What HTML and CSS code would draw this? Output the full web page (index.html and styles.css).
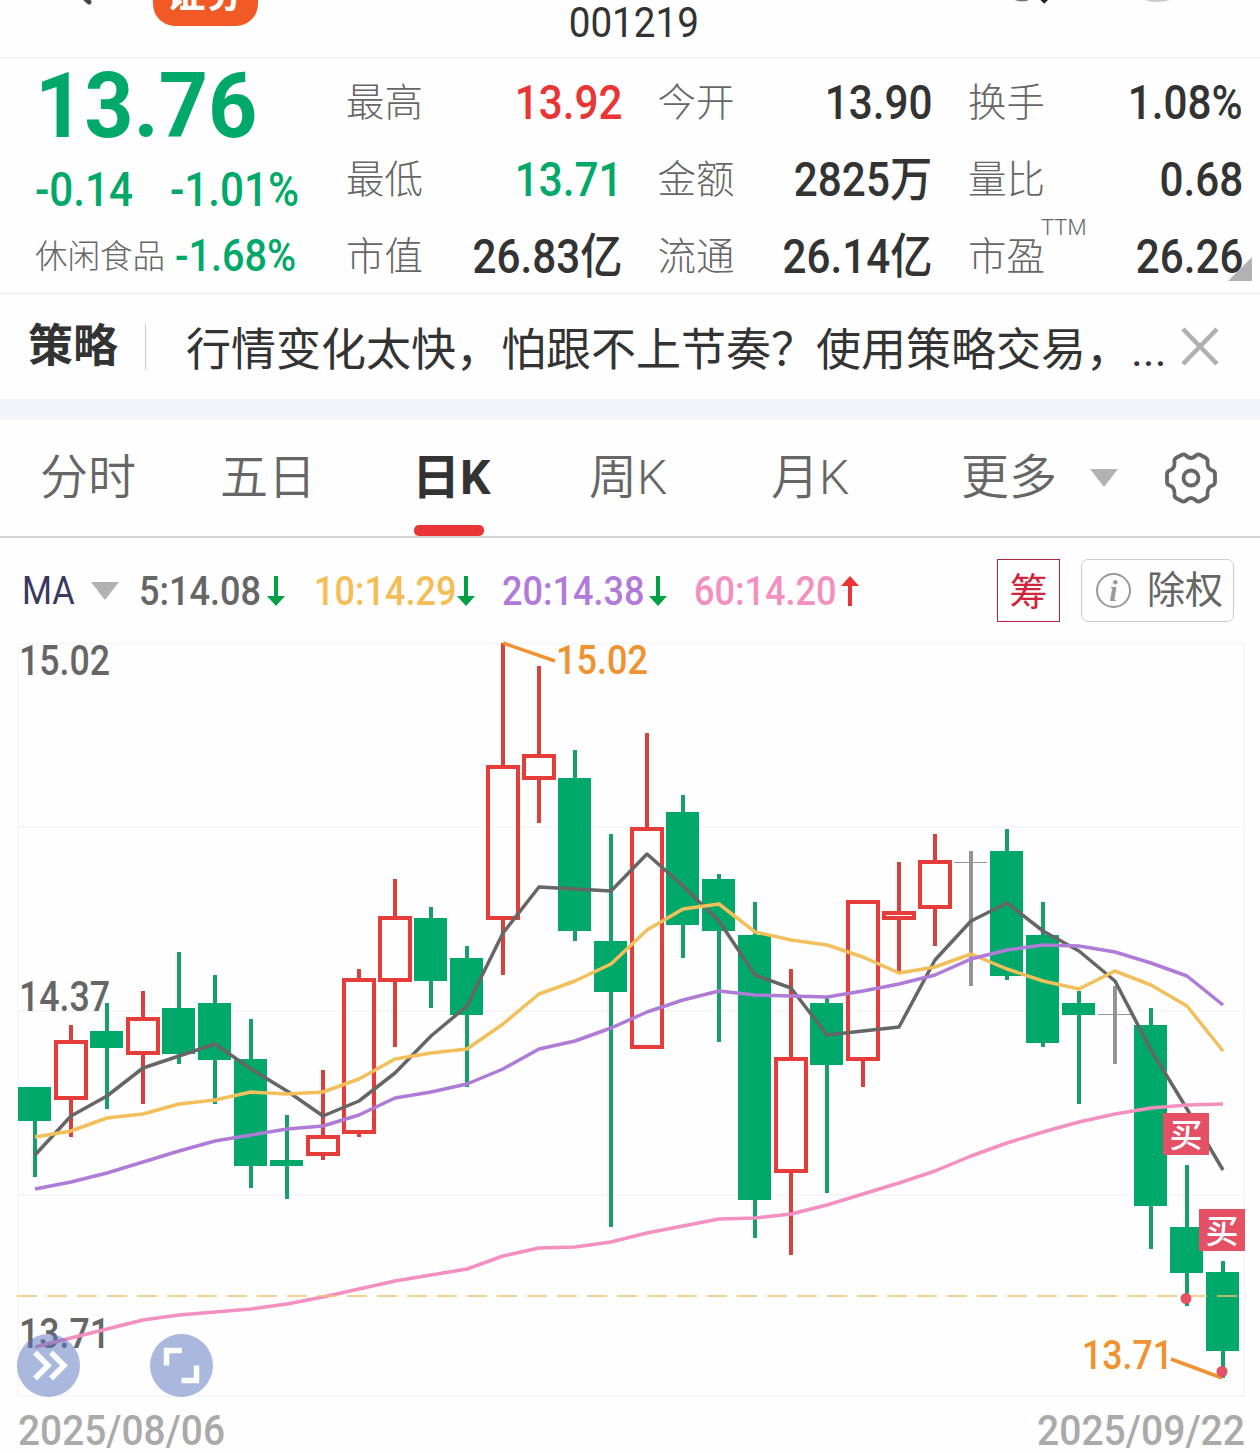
FILE: index.html
```
<!DOCTYPE html>
<html lang="zh-CN">
<head>
    <meta charset="UTF-8">
    <title>001219</title>
    <link rel="stylesheet" href="styles.css">
</head>
<body>
    <div class="topbar">
        <svg class="back" width="20" height="8" viewBox="0 0 20 8"><path d="M0 -9L12 2" stroke="#444" stroke-width="5" stroke-linecap="round"/></svg>
        <div class="logo">证券</div>
        <div class="code"><span class="num">001219</span></div>
        <svg class="tools" width="200" height="8" viewBox="0 0 200 8">
            <circle cx="22" cy="-16" r="16" fill="none" stroke="#777" stroke-width="3"/>
            <path d="M34 -10L46 2" stroke="#222" stroke-width="5"/>
            <circle cx="157" cy="-38" r="39" fill="#eee" stroke="#c9c9c9" stroke-width="2"/>
        </svg>
    </div>

    <div class="quote">
        <div class="price-box">
            <div class="price"><span class="num">13.76</span></div>
            <div class="change"><span class="num">-0.14</span><span class="num">-1.01%</span></div>
            <div class="sector"><span class="sector-name">休闲食品</span><span class="num">-1.68%</span></div>
        </div>
        <div class="stats">
            <div class="stat"><label>最高</label><span class="num red">13.92</span></div>
            <div class="stat"><label>今开</label><span class="num">13.90</span></div>
            <div class="stat"><label>换手</label><span class="num">1.08%</span></div>
            <div class="stat"><label>最低</label><span class="num green one">13.71</span></div>
            <div class="stat"><label>金额</label><span class="num">2825万</span></div>
            <div class="stat"><label>量比</label><span class="num">0.68</span></div>
            <div class="stat"><label>市值</label><span class="num">26.83亿</span></div>
            <div class="stat"><label>流通</label><span class="num">26.14亿</span></div>
            <div class="stat"><label>市盈<span class="ttm">TTM</span></label><span class="num">26.26</span></div>
        </div>
        <div class="corner"></div>
    </div>

    <div class="notice">
        <b>策略</b>
        <p>行情变化太快，怕跟不上节奏？使用策略交易，...</p>
        <svg width="40" height="40" viewBox="0 0 40 40"><path d="M3 2L37 37M37 2L3 37" stroke="#b0b0b0" stroke-width="4.6"/></svg>
    </div>

    <div class="tabs">
        <div class="tab">分时</div>
        <div class="tab">五日</div>
        <div class="tab active">日K</div>
        <div class="tab">周K</div>
        <div class="tab">月K</div>
        <div class="tab">更多</div>
        <div class="caret"></div>
        <svg class="gear" width="54" height="54" viewBox="0 0 54 54" fill="none" stroke="#666" stroke-width="3.8" stroke-linejoin="round">
            <path d="M18.5 3.5Q21 3 22.5 5Q27 9 31.5 5Q33 3 35.5 3.5L42 7Q44 8.500 43.500 11Q43 18 48.500 19.500Q51 20.500 51 23V31Q51 33.500 48.500 34.500Q43 36 43.500 43Q44 45.500 42 47L35.500 50.500Q33 51 31.500 49Q27 45 22.500 49Q21 51 18.500 50.500L12 47Q10 45.500 10.500 43Q11 36 5.500 34.500Q3 33.500 3 31V23Q3 20.500 5.500 19.500Q11 18 10.500 11Q10 8.500 12 7Z"/>
            <circle cx="27" cy="27" r="7.500"/>
        </svg>
    </div>

    <div class="ma-row">
        <div class="ma-name"><span class="num">MA</span></div>
        <div class="caret"></div>
        <div class="ma ma5"><span class="num">5:14.08</span></div>
        <svg class="arrow down" width="18" height="30" viewBox="0 0 18 30"><path d="M7 0H11V20H18L9 30L0 20H7Z"/></svg>
        <div class="ma ma10"><span class="num">10:14.29</span></div>
        <svg class="arrow down" width="18" height="30" viewBox="0 0 18 30"><path d="M7 0H11V20H18L9 30L0 20H7Z"/></svg>
        <div class="ma ma20"><span class="num">20:14.38</span></div>
        <svg class="arrow down" width="18" height="30" viewBox="0 0 18 30"><path d="M7 0H11V20H18L9 30L0 20H7Z"/></svg>
        <div class="ma ma60"><span class="num">60:14.20</span></div>
        <svg class="arrow up" width="18" height="30" viewBox="0 0 18 30"><path d="M7 30H11V10H18L9 0L0 10H7Z"/></svg>
        <div class="chip-btn">筹</div>
        <div class="adjust-btn"><span class="info">i</span>除权</div>
    </div>

    <svg class="chart" width="1260" height="815" viewBox="0 638 1260 815">
        <path class="grid" d="M18 643.500H1244M18 827H1244M18 1011H1244M18 1195H1244M18 1396H1244M18 643V1396M1244 643V1396"/>
        <g class="axis">
            <text x="19" y="675" textLength="91">15.02</text>
            <text x="19" y="1011" textLength="91">14.37</text>
            <text x="19" y="1348" textLength="91">13.71</text>
        </g>
        <g id="candles"></g>
        <g id="lines"></g>
        <path class="dash" d="M17 1296H1238"/>
        <path class="pointer" d="M503 643L555 661M1171 1359L1222 1378"/>
        <g class="extreme">
            <text x="556" y="674" textLength="92">15.02</text>
            <text x="1082" y="1369" textLength="91">13.71</text>
        </g>
        <g class="buy">
            <circle cx="1186" cy="1298.500" r="5.500"/>
            <circle cx="1222" cy="1371.500" r="5.500"/>
            <rect x="1163" y="1113" width="46" height="42"/>
            <rect x="1199" y="1209" width="46" height="42"/>
            <text x="1186" y="1147">买</text>
            <text x="1222" y="1243">买</text>
        </g>
        <g class="round-btn">
            <circle cx="48.500" cy="1365.500" r="31.500"/>
            <circle cx="181.500" cy="1365.500" r="31.500"/>
            <path d="M35 1352.500L48 1365.500L35 1378.500M51 1352.500L64 1365.500L51 1378.500M182 1350.500H166.500V1365.500M181.500 1380.500H196.500V1365.500"/>
        </g>
        <g class="dates">
            <text x="18" y="1445" textLength="207">2025/08/06</text>
            <text x="1037" y="1445" textLength="208">2025/09/22</text>
        </g>
    </svg>
    <script src="chart.js"></script>
</body>
</html>
```
FILE: styles.css
```
body {
    margin: 0;
    width: 1260px;
    height: 1453px;
    overflow: hidden;
    background: #fefefe;
    color: #333;
    font-family: Roboto, "Noto Sans CJK SC", sans-serif;
}
.num {
    display: inline-block;
    transform: scaleX(0.88);
    transform-origin: left center;
    white-space: nowrap;
}
.red {
    color: #e93535;
}
.green {
    color: #00a969;
}

/* top bar */
.topbar {
    height: 57px;
    display: flex;
    align-items: flex-start;
    border-bottom: 1px solid #e9e9e9;
}
.back {
    margin-left: 77px;
}
.logo {
    margin: -30px 0 0 56px;
    width: 105px;
    height: 56px;
    line-height: 48px;
    border-radius: 22px;
    background: #f15a24;
    color: #fff;
    font-size: 39px;
    font-weight: 700;
    text-align: center;
}
.code {
    width: 751px;
    text-align: center;
    font-size: 42px;
    line-height: 46px;
}
.code .num {
    transform: scaleX(0.92);
    transform-origin: center;
}
.tools {
    flex: none;
    margin-left: -9px;
}

/* quote */
.quote {
    position: relative;
    height: 235px;
    display: flex;
    border-bottom: 1px solid #e9e9e9;
}
.price-box {
    width: 346px;
    flex: none;
    color: #00a969;
    font-weight: 500;
}
.price {
    height: 94px;
    line-height: 96px;
    padding-left: 35px;
    font-size: 91.5px;
    font-weight: 700;
}
.price .num {
    transform: scaleX(0.94);
}
.change {
    display: grid;
    grid-template-columns: 135px 160px;
    padding-left: 35px;
    height: 74px;
    line-height: 75px;
    font-size: 48px;
}
.sector {
    display: grid;
    grid-template-columns: 140px 150px;
    padding-left: 35px;
    line-height: 60px;
    font-size: 45px;
}
.sector-name {
    color: #666;
    font-size: 32.500px;
    font-weight: 300;
    line-height: 62px;
}
.stats {
    display: grid;
    grid-template-columns: 276px 275px 275px;
    grid-auto-rows: 77px;
    column-gap: 35.500px;
    padding-top: 6px;
}
.stat {
    display: flex;
    justify-content: space-between;
    line-height: 77px;
    font-size: 48px;
    font-weight: 500;
}
.stat label {
    position: relative;
    color: #666;
    font-size: 38.500px;
    font-weight: 300;
}
.stat .num {
    transform-origin: right center;
}
.ttm {
    position: absolute;
    left: 73px;
    top: -29px;
    font-size: 22px;
}
.corner {
    position: absolute;
    right: 8px;
    bottom: 12px;
    border-left: 24px solid transparent;
    border-bottom: 24px solid #b2b2b2;
}

/* notice */
.notice {
    height: 105px;
    display: flex;
    align-items: center;
    border-bottom: 21px solid #f3f4f9;
    font-size: 45px;
}
.notice b {
    width: 89px;
    margin-left: 28px;
    padding-right: 28px;
    line-height: 46px;
    border-right: 1px solid #ccc;
    white-space: nowrap;
}
.notice p {
    margin: 0 0 0 40px;
    width: 994px;
    flex: none;
    white-space: nowrap;
}

/* tabs */
.tabs {
    height: 116px;
    display: grid;
    grid-template-columns: 180px 192px 177px 182px 190px 129px 74px 54px;
    align-items: center;
    padding-left: 40px;
    border-bottom: 2px solid #d4d4d4;
    color: #666;
    font-size: 48px;
}
.tab {
    line-height: 116px;
    font-weight: 350;
}
.tab.active {
    position: relative;
    color: #333;
    font-weight: 700;
}
.tab.active::after {
    content: "";
    position: absolute;
    left: 2px;
    bottom: 0;
    width: 70px;
    height: 11px;
    border-radius: 5px;
    background: #e93535;
}
.caret {
    width: 0;
    border-left: 14px solid transparent;
    border-right: 14px solid transparent;
    border-top: 18px solid #b2b2b2;
}

/* moving averages */
.ma-row {
    height: 100px;
    display: grid;
    grid-template-columns: 69px 48px 128px 47px 143px 45px 147px 45px 147px 156px 84px 153px;
    align-items: center;
    padding-left: 22px;
    font-size: 41px;
    font-weight: 500;
}
.ma-row > * {
    margin-top: 5px;
}
.ma-name {
    color: #3b3860;
    font-size: 39px;
    font-weight: 400;
}
.ma5 {
    color: #666;
}
.ma10 {
    color: #f4bd55;
}
.ma20 {
    color: #b07bd8;
}
.ma60 {
    color: #f48fc1;
}
.arrow.down {
    fill: #00a046;
}
.arrow.up {
    fill: #e93535;
}
.chip-btn {
    box-sizing: border-box;
    width: 63px;
    height: 63px;
    line-height: 65px;
    border: 1px solid #b0243e;
    color: #d0243a;
    font-size: 38px;
    font-weight: 400;
    text-align: center;
}
.adjust-btn {
    box-sizing: border-box;
    height: 63px;
    line-height: 65px;
    display: flex;
    align-items: center;
    border: 1px solid #ccc;
    border-radius: 7px;
    color: #666;
    font-size: 38px;
    font-weight: 400;
}
.info {
    width: 31px;
    height: 31px;
    line-height: 31px;
    margin: 0 16px 0 14px;
    border: 2px solid #999;
    border-radius: 50%;
    color: #999;
    font: italic bold 30px/31px "Liberation Serif", serif;
    text-align: center;
}

/* chart */
.chart {
    display: block;
    font-size: 42px;
    font-weight: 500;
}
.grid {
    fill: none;
    stroke: #f7f7f7;
    stroke-width: 2;
}
.axis {
    fill: #666;
}
.chart text {
    lengthAdjust: spacingAndGlyphs;
}
.fall {
    fill: #00a969;
}
.rise {
    fill: none;
    stroke: #e63c3a;
    stroke-width: 4;
}
.wick {
    stroke-width: 4;
}
.wick.g {
    stroke: #169f6b;
}
.wick.r {
    stroke: #d8403d;
}
.wick.n {
    stroke: #93939b;
}
.flat {
    stroke: #93939b;
    stroke-width: 1;
}
.line {
    fill: none;
    stroke-width: 3.500;
    stroke-linejoin: round;
}
.dash {
    stroke: #f0c471;
    stroke-width: 1.500;
    stroke-dasharray: 20 10;
}
.pointer {
    fill: none;
    stroke: #f0922f;
    stroke-width: 3.500;
}
.extreme {
    fill: #f0922f;
    font-size: 40px;
}
.buy {
    fill: #e55064;
}
.buy text {
    fill: #fff;
    font-size: 33px;
    text-anchor: middle;
}
.round-btn circle {
    fill: #5572bd;
    opacity: 0.5;
}
.round-btn path {
    fill: none;
    stroke: #fff;
    stroke-width: 5.500;
}
.dates {
    fill: #aaa;
}
```
FILE: chart.js
```
const svgNS = "http://www.w3.org/2000/svg";

// type, body top, body bottom, wick top, wick bottom
const candles = [
    ["g", 1087, 1121, 1087, 1177], ["r", 1040, 1100, 1025, 1137], ["g", 1031, 1048, 1003, 1109],
    ["r", 1017, 1055, 991, 1104], ["g", 1008, 1054, 952, 1064], ["g", 1003, 1060, 975, 1104],
    ["g", 1059, 1166, 1019, 1188], ["g", 1160, 1166, 1115, 1199], ["r", 1135, 1156, 1070, 1160],
    ["r", 978, 1134, 969, 1137], ["r", 916, 982, 879, 1047], ["g", 918, 981, 907, 1008],
    ["g", 958, 1015, 946, 1087], ["r", 765, 920, 643, 975], ["r", 754, 780, 666, 823],
    ["g", 778, 931, 750, 941], ["g", 941, 992, 834, 1227], ["r", 827, 1049, 733, 1049],
    ["g", 812, 925, 795, 958], ["g", 879, 931, 874, 1042], ["g", 935, 1200, 902, 1238],
    ["r", 1057, 1173, 969, 1255], ["g", 1003, 1065, 998, 1193], ["r", 900, 1061, 900, 1087],
    ["r", 911, 920, 862, 973], ["r", 860, 909, 834, 946], ["n", 862, 862, 851, 986],
    ["g", 851, 976, 829, 980], ["g", 935, 1043, 902, 1047], ["g", 1003, 1015, 991, 1104],
    ["n", 1014, 1014, 986, 1064], ["g", 1025, 1206, 1008, 1249], ["g", 1227, 1273, 1165, 1306],
    ["g", 1272, 1351, 1261, 1378]
];

const averages = {
    "#666666": [1155, 1116, 1096, 1068, 1056, 1044, 1069, 1091, 1116, 1101, 1073, 1036, 1006, 933, 887, 889, 891, 854, 886, 921, 975, 988, 1035, 1031, 1027, 960, 921, 903, 931, 951, 981, 1050, 1109, 1170],
    "#f2bf5b": [1137, 1131, 1118, 1114, 1104, 1100, 1092, 1094, 1092, 1079, 1059, 1053, 1049, 1024, 994, 981, 964, 930, 909, 904, 932, 940, 945, 957, 973, 967, 954, 969, 981, 989, 971, 985, 1006, 1051],
    "#ae7bd6": [1189, 1182, 1173, 1162, 1151, 1141, 1135, 1129, 1126, 1115, 1098, 1092, 1084, 1069, 1049, 1041, 1028, 1012, 1000, 991, 995, 996, 997, 991, 984, 975, 959, 950, 945, 946, 952, 963, 976, 1005],
    "#f48fc1": [1347, 1338, 1329, 1320, 1315, 1312, 1309, 1304, 1297, 1289, 1281, 1275, 1269, 1256, 1248, 1247, 1242, 1233, 1226, 1219, 1218, 1214, 1205, 1194, 1183, 1171, 1156, 1143, 1132, 1122, 1114, 1108, 1105, 1104]
};

function add(parent, tag, attrs) {
    const el = document.createElementNS(svgNS, tag);
    for (const key in attrs) {
        el.setAttribute(key, attrs[key]);
    }
    document.getElementById(parent).appendChild(el);
}

candles.forEach(([type, top, bottom, high, low], i) => {
    const x = 35 + i * 36;
    if (type === "r") {
        // hollow body, so the wick is drawn in two parts
        add("candles", "path", { class: "wick r", d: `M${x} ${high}V${top}M${x} ${bottom}V${low}` });
        add("candles", "rect", { class: "rise", x: x - 15, y: top + 2, width: 30, height: bottom - top - 4 });
        return;
    }
    add("candles", "path", { class: "wick " + type, d: `M${x} ${high}V${low}` });
    if (type === "g") {
        add("candles", "rect", { class: "fall", x: x - 17, y: top, width: 33, height: bottom - top });
    } else {
        add("candles", "path", { class: "flat", d: `M${x - 17} ${top + 0.5}h33` });
    }
});

for (const color in averages) {
    const points = averages[color].map((y, i) => `${35 + i * 36},${y}`).join(" ");
    add("lines", "polyline", { class: "line", stroke: color, points: points });
}

document.querySelectorAll(".chart text[textLength]").forEach(t => t.setAttribute("lengthAdjust", "spacingAndGlyphs"));
```
